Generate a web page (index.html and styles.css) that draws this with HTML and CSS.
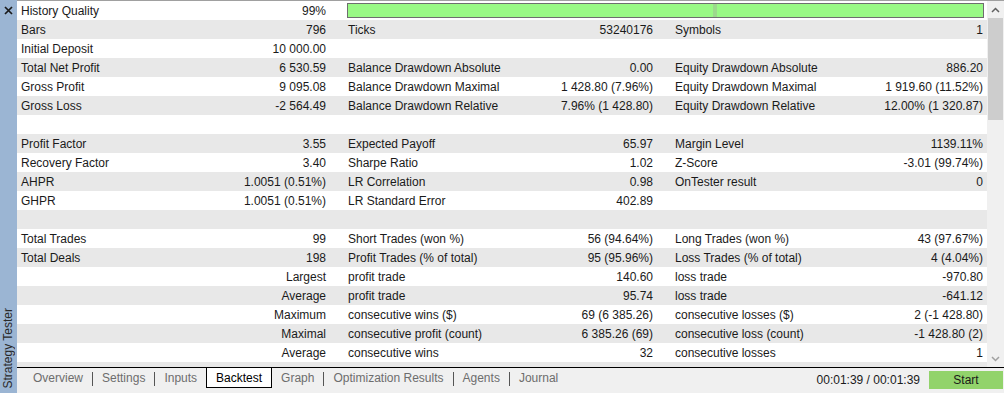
FILE: index.html
```html
<!DOCTYPE html>
<html lang="en">
<head>
    <meta charset="UTF-8">
    <title>Strategy Tester - Backtest</title>
    <link rel="stylesheet" href="styles.css">
</head>
<body>
    <div class="window">
        <div class="sidebar">
            <svg class="close" width="9" height="9" viewBox="0 0 9 9">
                <path d="M1 1 L8 8 M8 1 L1 8" stroke="#1a1a1a" stroke-width="1.7"/>
            </svg>
            <div class="side-title">Strategy Tester</div>
        </div>

        <div class="main">
            <div class="content">
                <div class="report">
                    <div class="row">
                        <div class="label">History Quality</div><div class="value">99%</div>
                        <div class="quality"><span class="mark"></span></div>
                    </div>
                    <div class="row">
                        <div class="label">Bars</div><div class="value">796</div>
                        <div class="label">Ticks</div><div class="value">53240176</div>
                        <div class="label">Symbols</div><div class="value last">1</div>
                    </div>
                    <div class="row">
                        <div class="label">Initial Deposit</div><div class="value">10 000.00</div>
                        <div class="label"></div><div class="value"></div>
                        <div class="label"></div><div class="value last"></div>
                    </div>
                    <div class="row">
                        <div class="label">Total Net Profit</div><div class="value">6 530.59</div>
                        <div class="label">Balance Drawdown Absolute</div><div class="value">0.00</div>
                        <div class="label">Equity Drawdown Absolute</div><div class="value last">886.20</div>
                    </div>
                    <div class="row">
                        <div class="label">Gross Profit</div><div class="value">9 095.08</div>
                        <div class="label">Balance Drawdown Maximal</div><div class="value">1 428.80 (7.96%)</div>
                        <div class="label">Equity Drawdown Maximal</div><div class="value last">1 919.60 (11.52%)</div>
                    </div>
                    <div class="row">
                        <div class="label">Gross Loss</div><div class="value">-2 564.49</div>
                        <div class="label">Balance Drawdown Relative</div><div class="value">7.96% (1 428.80)</div>
                        <div class="label">Equity Drawdown Relative</div><div class="value last">12.00% (1 320.87)</div>
                    </div>
                    <div class="row empty"></div>
                    <div class="row">
                        <div class="label">Profit Factor</div><div class="value">3.55</div>
                        <div class="label">Expected Payoff</div><div class="value">65.97</div>
                        <div class="label">Margin Level</div><div class="value last">1139.11%</div>
                    </div>
                    <div class="row">
                        <div class="label">Recovery Factor</div><div class="value">3.40</div>
                        <div class="label">Sharpe Ratio</div><div class="value">1.02</div>
                        <div class="label">Z-Score</div><div class="value last">-3.01 (99.74%)</div>
                    </div>
                    <div class="row">
                        <div class="label">AHPR</div><div class="value">1.0051 (0.51%)</div>
                        <div class="label">LR Correlation</div><div class="value">0.98</div>
                        <div class="label">OnTester result</div><div class="value last">0</div>
                    </div>
                    <div class="row">
                        <div class="label">GHPR</div><div class="value">1.0051 (0.51%)</div>
                        <div class="label">LR Standard Error</div><div class="value">402.89</div>
                        <div class="label"></div><div class="value last"></div>
                    </div>
                    <div class="row empty"></div>
                    <div class="row">
                        <div class="label">Total Trades</div><div class="value">99</div>
                        <div class="label">Short Trades (won %)</div><div class="value">56 (94.64%)</div>
                        <div class="label">Long Trades (won %)</div><div class="value last">43 (97.67%)</div>
                    </div>
                    <div class="row">
                        <div class="label">Total Deals</div><div class="value">198</div>
                        <div class="label">Profit Trades (% of total)</div><div class="value">95 (95.96%)</div>
                        <div class="label">Loss Trades (% of total)</div><div class="value last">4 (4.04%)</div>
                    </div>
                    <div class="row">
                        <div class="label"></div><div class="value">Largest</div>
                        <div class="label">profit trade</div><div class="value">140.60</div>
                        <div class="label">loss trade</div><div class="value last">-970.80</div>
                    </div>
                    <div class="row">
                        <div class="label"></div><div class="value">Average</div>
                        <div class="label">profit trade</div><div class="value">95.74</div>
                        <div class="label">loss trade</div><div class="value last">-641.12</div>
                    </div>
                    <div class="row">
                        <div class="label"></div><div class="value">Maximum</div>
                        <div class="label">consecutive wins ($)</div><div class="value">69 (6 385.26)</div>
                        <div class="label">consecutive losses ($)</div><div class="value last">2 (-1 428.80)</div>
                    </div>
                    <div class="row">
                        <div class="label"></div><div class="value">Maximal</div>
                        <div class="label">consecutive profit (count)</div><div class="value">6 385.26 (69)</div>
                        <div class="label">consecutive loss (count)</div><div class="value last">-1 428.80 (2)</div>
                    </div>
                    <div class="row">
                        <div class="label"></div><div class="value">Average</div>
                        <div class="label">consecutive wins</div><div class="value">32</div>
                        <div class="label">consecutive losses</div><div class="value last">1</div>
                    </div>
                    <div class="row empty"></div>
                </div>

                <div class="scrollbar">
                    <div class="arrow">
                        <svg width="9" height="6" viewBox="0 0 9 6"><path d="M1 5 L4.5 1.5 L8 5" fill="none" stroke="#606060" stroke-width="1.5"/></svg>
                    </div>
                    <div class="thumb"></div>
                    <div class="track"></div>
                    <div class="arrow">
                        <svg width="9" height="6" viewBox="0 0 9 6"><path d="M1 1 L4.5 4.5 L8 1" fill="none" stroke="#a0a0a0" stroke-width="1.5"/></svg>
                    </div>
                </div>
            </div>

            <div class="tabbar">
                <div class="tab">Overview</div>
                <span class="sep"></span>
                <div class="tab">Settings</div>
                <span class="sep"></span>
                <div class="tab">Inputs</div>
                <div class="tab active">Backtest</div>
                <div class="tab">Graph</div>
                <span class="sep"></span>
                <div class="tab">Optimization Results</div>
                <span class="sep"></span>
                <div class="tab">Agents</div>
                <span class="sep"></span>
                <div class="tab">Journal</div>

                <div class="timer">00:01:39 / 00:01:39</div>
                <button class="start">Start</button>
            </div>
        </div>
    </div>
</body>
</html>
```

FILE: styles.css
```css
body {
    margin: 0;
    font-family: "Liberation Sans", Arial, sans-serif;
    font-size: 12px;
    color: #1a1a1a;
    background-color: #f0f0f0;
    overflow: hidden;
}
.window {
    display: flex;
    width: 1004px;
    height: 393px;
}
.sidebar {
    width: 17px;
    flex-shrink: 0;
    background-color: #9bb5d3;
    display: flex;
    flex-direction: column;
    justify-content: space-between;
    align-items: center;
}
.close {
    margin-top: 6px;
    margin-right: 1px;
}
.side-title {
    writing-mode: vertical-rl;
    transform: rotate(180deg);
    color: #2a2a2a;
    margin-bottom: 5px;
    margin-right: 1px;
    line-height: 15px;
}
.main {
    flex: 1;
    display: flex;
    flex-direction: column;
    border-top: 1px solid #a0a0a0;
}
.content {
    display: flex;
    height: 366px;
    background-color: #fff;
}
.report {
    width: 970px;
    overflow: hidden;
}
.row {
    display: grid;
    grid-template-columns: 160px 167px 160px 167px 160px 1fr;
    box-sizing: border-box;
    height: 19px;
    padding-top: 1px;
    line-height: 18px;
    white-space: nowrap;
}
.row:nth-child(even) {
    background-color: #e8e8e8;
}
.label {
    padding-left: 4px;
}
.value {
    text-align: right;
    padding-right: 18px;
}
.value.last {
    padding-right: 4px;
}
.quality {
    grid-column: 3 / 7;
    position: relative;
    height: 13px;
    margin: 1px 3px 0 3px;
    border: 1px solid #6e6e6e;
    background-color: #99f985;
}
.quality .mark {
    position: absolute;
    left: 365px;
    top: 0;
    width: 4px;
    height: 13px;
    background-color: #9cd98c;
}
.scrollbar {
    width: 17px;
    display: flex;
    flex-direction: column;
    align-items: center;
    background-color: #f0f0f0;
}
.arrow {
    height: 17px;
    display: flex;
    align-items: center;
    justify-content: center;
}
.thumb {
    width: 15px;
    height: 102px;
    background-color: #cdcdcd;
}
.track {
    flex: 1;
}
.tabbar {
    display: flex;
    align-items: flex-start;
    height: 25px;
    border-top: 1px solid #000;
    padding-left: 7px;
    background-color: #f0f0f0;
}
.tab {
    padding: 1px 9px 0;
    height: 18px;
    line-height: 18px;
    color: #6d6d6d;
}
.tab.active {
    color: #000;
    background-color: #fff;
    border: 1px solid #000;
    border-top: none;
    padding: 1px 9px 0;
}
.sep {
    width: 1px;
    height: 14px;
    margin-top: 4px;
    background-color: #555;
}
.timer {
    margin-left: auto;
    margin-top: 3px;
    line-height: 18px;
    color: #1a1a1a;
}
.start {
    margin: 3px 1px 0 9px;
    width: 74px;
    height: 18px;
    padding: 0;
    border: none;
    background-color: #92d36b;
    font-family: "Liberation Sans", Arial, sans-serif;
    font-size: 12px;
    color: #1a1a1a;
}
```
